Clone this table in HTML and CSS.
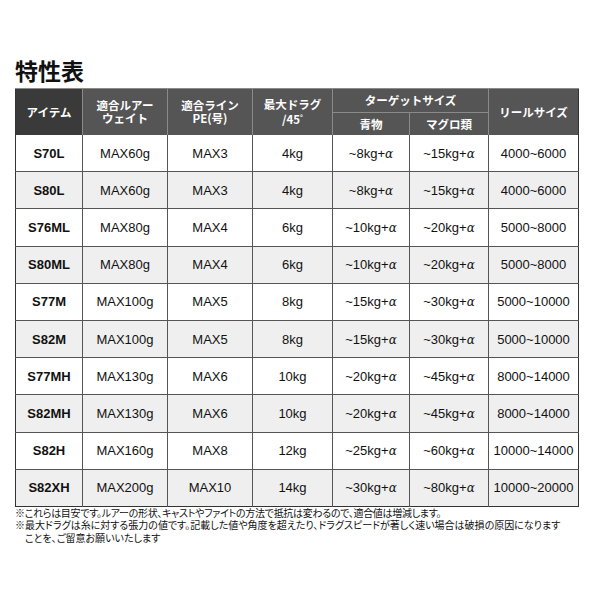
FILE: index.html
```html
<!DOCTYPE html>
<html lang="ja">
<head>
<meta charset="utf-8">
<title>特性表</title>
<link rel="stylesheet" href="styles.css">
</head>
<body>
<div class="page">
  <h1 class="title">特性表</h1>
  <table class="spec">
    <colgroup>
      <col class="c1"><col class="c2"><col class="c3"><col class="c4"><col class="c5"><col class="c6"><col class="c7">
    </colgroup>
    <thead>
      <tr class="h1">
        <th rowspan="2" class="item">アイテム</th>
        <th rowspan="2">適合ルアー<br>ウェイト</th>
        <th rowspan="2">適合ライン<br>PE(号)</th>
        <th rowspan="2">最大ドラグ<br>/45<span class="deg">°</span></th>
        <th colspan="2" class="target">ターゲットサイズ</th>
        <th rowspan="2">リールサイズ</th>
      </tr>
      <tr class="h2">
        <th>青物</th>
        <th>マグロ類</th>
      </tr>
    </thead>
    <tbody>
      <tr><td class="m">S70L</td><td>MAX60g</td><td>MAX3</td><td>4kg</td><td>~8kg+<i>α</i></td><td>~15kg+<i>α</i></td><td>4000~6000</td></tr>
      <tr><td class="m">S80L</td><td>MAX60g</td><td>MAX3</td><td>4kg</td><td>~8kg+<i>α</i></td><td>~15kg+<i>α</i></td><td>4000~6000</td></tr>
      <tr><td class="m">S76ML</td><td>MAX80g</td><td>MAX4</td><td>6kg</td><td>~10kg+<i>α</i></td><td>~20kg+<i>α</i></td><td>5000~8000</td></tr>
      <tr><td class="m">S80ML</td><td>MAX80g</td><td>MAX4</td><td>6kg</td><td>~10kg+<i>α</i></td><td>~20kg+<i>α</i></td><td>5000~8000</td></tr>
      <tr><td class="m">S77M</td><td>MAX100g</td><td>MAX5</td><td>8kg</td><td>~15kg+<i>α</i></td><td>~30kg+<i>α</i></td><td>5000~10000</td></tr>
      <tr><td class="m">S82M</td><td>MAX100g</td><td>MAX5</td><td>8kg</td><td>~15kg+<i>α</i></td><td>~30kg+<i>α</i></td><td>5000~10000</td></tr>
      <tr><td class="m">S77MH</td><td>MAX130g</td><td>MAX6</td><td>10kg</td><td>~20kg+<i>α</i></td><td>~45kg+<i>α</i></td><td>8000~14000</td></tr>
      <tr><td class="m">S82MH</td><td>MAX130g</td><td>MAX6</td><td>10kg</td><td>~20kg+<i>α</i></td><td>~45kg+<i>α</i></td><td>8000~14000</td></tr>
      <tr><td class="m">S82H</td><td>MAX160g</td><td>MAX8</td><td>12kg</td><td>~25kg+<i>α</i></td><td>~60kg+<i>α</i></td><td>10000~14000</td></tr>
      <tr><td class="m">S82XH</td><td>MAX200g</td><td>MAX10</td><td>14kg</td><td>~30kg+<i>α</i></td><td>~80kg+<i>α</i></td><td>10000~20000</td></tr>
    </tbody>
  </table>
  <div class="notes">
    <p class="tight">※これらは目安です。ルアーの形状、キャストやファイトの方法で抵抗は変わるので、適合値は増減します。</p>
    <p>※最大ドラグは糸に対する張力の値です。記載した値や角度を超えたり、ドラグスピードが著しく速い場合は破損の原因になります</p>
    <p class="indent">ことを、ご留意お願いいたします</p>
  </div>
</div>
</body>
</html>
```

FILE: styles.css
```css
html, body {
  margin: 0;
  padding: 0;
  background: #fff;
}

.page {
  padding: 56px 21px 0 15px;
  font-family: "Liberation Sans", "Noto Sans CJK JP", sans-serif;
  color: #111;
}

.title {
  margin: 0 0 4px 0;
  font-family: "Noto Sans CJK JP", sans-serif;
  font-size: 23px;
  line-height: 28px;
  font-weight: 700;
  color: #111;
}

.spec {
  width: 564px;
  border-collapse: collapse;
  table-layout: fixed;
  border: 1.5px solid #333;
}

.c1 { width: 67px; }
.c2 { width: 85px; }
.c3 { width: 85px; }
.c4 { width: 80px; }
.c5 { width: 77px; }
.c6 { width: 79px; }
.c7 { width: 90px; }

.spec th {
  background: #555;
  color: #fff;
  font-family: "Noto Sans CJK JP", sans-serif;
  font-weight: 700;
  font-size: 11.5px;
  line-height: 13px;
  padding: 0;
  text-align: center;
  border-left: 1px solid #8a8a8a;
  border-top: 1px solid #8a8a8a;
}

.spec th.item {
  background: #3a3a3a;
  border-left: none;
}

.h1 th { height: 23px; }
.h2 th { height: 22px; }

.deg {
  font-size: 7px;
  vertical-align: 4px;
}

.spec td {
  height: 36.2px;
  padding: 0;
  text-align: center;
  font-size: 13px;
  color: #111;
  border-top: 1px solid #555;
  border-left: 1px solid #555;
}

.spec td:first-child { border-left: none; }

.spec tbody tr:nth-child(even) td { background: #efefef; }

.spec tbody tr:first-child td { border-top: none; }

.spec td.m { font-weight: 700; }

.spec td i {
  font-style: italic;
  font-family: "DejaVu Serif", serif;
  font-size: 12px;
}

.notes {
  margin-top: 0;
  font-family: "Noto Sans CJK JP", sans-serif;
  font-size: 10px;
  line-height: 12.5px;
  color: #111;
  font-feature-settings: "palt";
  white-space: nowrap;
}

.notes p { margin: 0; }

.notes .tight { letter-spacing: -0.3px; }

.notes .indent { padding-left: 10px; }
```
